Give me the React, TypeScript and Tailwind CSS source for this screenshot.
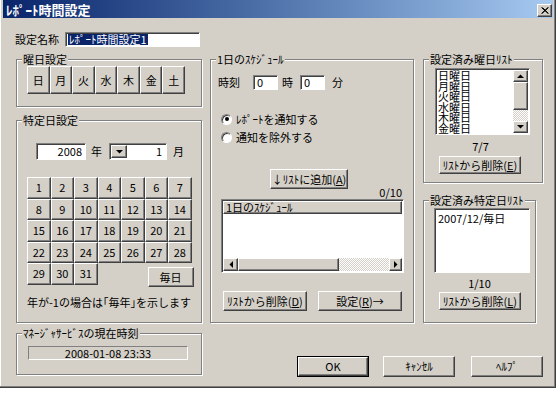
import React from "react";

const raised =
  "bg-[#d4d0c8] border border-t-white border-l-white border-r-[#404040] border-b-[#404040] shadow-[inset_-1px_-1px_0_#808080]";
const sunken =
  "bg-white border border-t-[#808080] border-l-[#808080] border-b-white border-r-white shadow-[inset_1px_1px_0_#404040]";
const dither =
  "bg-[repeating-conic-gradient(#ffffff_0_25%,#d4d0c8_0_50%)] bg-[length:2px_2px]";

function Btn({
  className = "",
  children,
}: {
  className?: string;
  children?: React.ReactNode;
}) {
  return (
    <button
      type="button"
      className={`${raised} flex items-center justify-center text-[11px] leading-none whitespace-nowrap ${className}`}
    >
      {children}
    </button>
  );
}

function Arrow({ dir }: { dir: "up" | "down" | "left" | "right" }) {
  const pts = {
    up: "0,4 3.5,0.5 7,4",
    down: "0,0 7,0 3.5,3.5",
    left: "4,0 4,7 0.5,3.5",
    right: "0,0 0,7 3.5,3.5",
  }[dir];
  const vertical = dir === "up" || dir === "down";
  return (
    <svg width={vertical ? 7 : 4} height={vertical ? 4 : 7}>
      <polygon points={pts} fill="#000" />
    </svg>
  );
}

function Group({
  label,
  className = "",
  children,
}: {
  label: string;
  className?: string;
  children?: React.ReactNode;
}) {
  return (
    <div
      className={`relative border border-[#808080] shadow-[inset_1px_1px_0_#fff,1px_1px_0_#fff] ${className}`}
    >
      <span className="absolute -top-[7px] left-[5px] bg-[#d4d0c8] px-[1px] text-[11px] leading-[12px] whitespace-nowrap">
        {label}
      </span>
      {children}
    </div>
  );
}

function Radio({ checked, label }: { checked?: boolean; label: string }) {
  return (
    <div className="h-[18px] flex items-center pl-[10px]">
      <span
        className={`${sunken} w-[11px] h-[11px] rounded-full flex items-center justify-center`}
      >
        {checked && <span className="w-[4px] h-[4px] rounded-full bg-black" />}
      </span>
      <span className="ml-[4px] text-[11px] leading-none">{label}</span>
    </div>
  );
}

const weekdays = ["日", "月", "火", "水", "木", "金", "土"];
const days = Array.from({ length: 31 }, (_, i) => i + 1);
// only the visible part of the list (土曜日 is scrolled out of view)
const weekList = ["日曜日", "月曜日", "火曜日", "水曜日", "木曜日", "金曜日"];

export default function App() {
  return (
    <div className="w-[560px] h-[393px] bg-white text-black font-['Noto_Sans_CJK_JP',sans-serif]">
      <div className="w-[556px] h-[388px] bg-[#d4d0c8] border-r border-b border-r-[#404040] border-b-[#404040] shadow-[inset_-1px_-1px_0_#808080,inset_1px_0_0_#fff]">
        {/* title bar */}
        <div className="ml-[3px] w-[550px] h-[18px] bg-linear-to-r from-[#0a246a] to-[#a6caf0] flex items-center justify-between pl-[3px] pr-[1px]">
          <span className="text-white font-bold text-[13px] leading-none">
            ﾚﾎﾟｰﾄ時間設定
          </span>
          <button
            type="button"
            className={`${raised} w-[15px] h-[13px] mt-[3px] flex items-center justify-center`}
          >
            <svg width="8" height="7" viewBox="0 0 8 7">
              <path d="M0.5 0.5 L7 6.5 M1.5 0.5 L7.5 6.5 M7 0.5 L0.5 6.5 M7.5 0.5 L1 6.5" stroke="#000" strokeWidth="1" />
            </svg>
          </button>
        </div>

        <div className="flex">
          {/* left column */}
          <div className="ml-[16px] w-[186px] flex flex-col">
            <div className="mt-[14px] h-[15px] flex items-center">
              <span className="w-[50px] -ml-[1px] text-[11px] leading-none">設定名称</span>
              <div className={`${sunken} w-[135px] h-[15px] flex items-center pl-[2px]`}>
                <span className="bg-[#0a246a] text-white text-[11px] leading-[11px] px-[1px]">
                  ﾚﾎﾟｰﾄ時間設定1
                </span>
              </div>
            </div>

            <Group label="曜日設定" className="mt-[12px] h-[48px]">
              <div className="mt-[6px] ml-[10px] w-[158px] h-[28px] grid grid-cols-7">
                {weekdays.map((d) => (
                  <Btn key={d} className="h-[28px]">
                    {d}
                  </Btn>
                ))}
              </div>
            </Group>

            <Group label="特定日設定" className="mt-[13px] h-[203px]">
              <div className="mt-[22px] h-[17px] flex items-center">
                <div className={`${sunken} ml-[19px] w-[50px] h-[17px] flex items-center justify-end pr-[3px] text-[11px] leading-none`}>
                  2008
                </div>
                <span className="ml-[5px] text-[11px] leading-none">年</span>
                <div className={`${sunken} ml-[7px] w-[58px] h-[17px] flex items-center p-[1px]`}>
                  <div className={`${raised} w-[16px] h-[13px] flex items-center justify-center`}>
                    <Arrow dir="down" />
                  </div>
                  <span className="flex-1 text-right pr-[3px] text-[11px] leading-none">1</span>
                </div>
                <span className="ml-[6px] text-[11px] leading-none">月</span>
              </div>

              <div className="mt-[17px] ml-[10px] grid grid-cols-[repeat(7,23.5px)] auto-rows-[21.5px]">
                {days.map((d) => (
                  <Btn key={d}>{d}</Btn>
                ))}
                <Btn className="col-start-6 col-span-2 ml-[3px] mt-[4px] w-[46px] h-[20px]">毎日</Btn>
              </div>

              <div className="mt-[11px] text-center text-[11px] leading-[12px]">
                年が-1の場合は｢毎年｣を示します
              </div>
            </Group>

            <Group label="ﾏﾈｰｼﾞｬｻｰﾋﾞｽの現在時刻" className="mt-[10px] h-[42px]">
              <div className="mt-[12px] ml-[11px] w-[160px] h-[14px] border border-t-[#808080] border-l-[#808080] border-b-white border-r-white flex items-center justify-center text-[11px] leading-none">
                2008-01-08 23:33
              </div>
            </Group>
          </div>

          {/* right part */}
          <div className="ml-[8px] mt-[41px] flex flex-col">
            <div className="flex">
              <Group label="1日のｽｹｼﾞｭｰﾙ" className="w-[204px] h-[264px]">
                <div className="mt-[15px] h-[15px] flex items-center text-[11px] leading-none">
                  <span className="ml-[7px] w-[35px]">時刻</span>
                  <div className={`${sunken} w-[25px] h-[15px] flex items-center pl-[3px]`}>0</div>
                  <span className="ml-[4px]">時</span>
                  <div className={`${sunken} ml-[7px] w-[25px] h-[15px] flex items-center pl-[3px]`}>0</div>
                  <span className="ml-[7px]">分</span>
                </div>

                <div className="mt-[20px]">
                  <Radio checked label="ﾚﾎﾟｰﾄを通知する" />
                  <Radio label="通知を除外する" />
                </div>

                <Btn className="mt-[23px] ml-[59px] w-[78px] h-[20px]">
                  ↓ﾘｽﾄに追加(<u>A</u>)
                </Btn>
                <div className="-mt-[3px] pr-[11px] text-right text-[11px] leading-[12px]">0/10</div>

                <div className={`${sunken} mt-[1px] ml-[10px] w-[183px] h-[74px] p-[1px] flex flex-col`}>
                  <div className={`${raised} h-[13px] flex items-center pl-[2px] text-[11px] leading-none`}>
                    1日のｽｹｼﾞｭｰﾙ
                  </div>
                  <div className="flex-1 bg-white" />
                  <div className="h-[13px] flex">
                    <div className={`${raised} w-[15px] flex items-center justify-center`}>
                      <Arrow dir="left" />
                    </div>
                    <div className={`${raised} w-[101px]`} />
                    <div className={`flex-1 ${dither}`} />
                    <div className={`${raised} w-[13px] flex items-center justify-center`}>
                      <Arrow dir="right" />
                    </div>
                  </div>
                </div>

                <div className="mt-[18px] flex">
                  <Btn className="ml-[12px] w-[84px] h-[20px]">
                    ﾘｽﾄから削除(<u>D</u>)
                  </Btn>
                  <Btn className="ml-[11px] w-[84px] h-[20px]">
                    設定(<u>R</u>)→
                  </Btn>
                </div>
              </Group>

              <div className="ml-[9px] w-[120px] flex flex-col">
                <Group label="設定済み曜日ﾘｽﾄ" className="h-[124px]">
                  <div className={`${sunken} mt-[8px] ml-[11px] w-[95px] h-[67px] p-[1px] flex`}>
                    <div className="flex-1 pl-[1px] text-[11px] leading-[10.5px]">
                      {weekList.map((w) => (
                        <div key={w}>{w}</div>
                      ))}
                    </div>
                    <div className="w-[15px] flex flex-col">
                      <div className={`${raised} h-[12px] flex items-center justify-center`}>
                        <Arrow dir="up" />
                      </div>
                      <div className={`${raised} h-[28px]`} />
                      <div className={`flex-1 ${dither}`} />
                      <div className={`${raised} h-[12px] flex items-center justify-center`}>
                        <Arrow dir="down" />
                      </div>
                    </div>
                  </div>
                  <div className="mt-[5px] w-[113px] text-center text-[11px] leading-[12px]">7/7</div>
                  <Btn className="mt-[4px] ml-[15px] w-[82px] h-[18px]">
                    ﾘｽﾄから削除(<u>E</u>)
                  </Btn>
                </Group>

                <Group label="設定済み特定日ﾘｽﾄ" className="mt-[17px] w-[113px] h-[123px]">
                  <div className={`${sunken} mt-[7px] ml-[10px] w-[96px] h-[65px] pl-[3px] pt-[3px] text-[11px] leading-[12px]`}>
                    2007/12/毎日
                  </div>
                  <div className="mt-[4px] text-center text-[11px] leading-[12px]">1/10</div>
                  <Btn className="mt-[3px] ml-[15px] w-[82px] h-[18px]">
                    ﾘｽﾄから削除(<u>L</u>)
                  </Btn>
                </Group>
              </div>
            </div>

            <div className="mt-[33px] ml-[87px] flex">
              <div className="border border-black">
                <Btn className="w-[70px] h-[19px]">OK</Btn>
              </div>
              <Btn className="ml-[14px] w-[72px] h-[21px]">ｷｬﾝｾﾙ</Btn>
              <Btn className="ml-[16px] w-[72px] h-[21px]">ﾍﾙﾌﾟ</Btn>
            </div>
          </div>
        </div>
      </div>
    </div>
  );
}
